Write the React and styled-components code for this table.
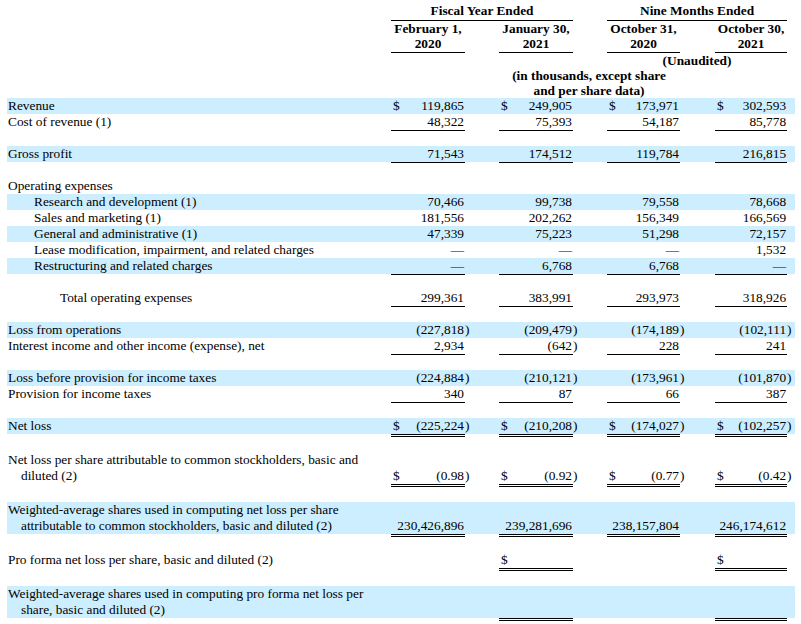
import React from 'react';
import styled, { createGlobalStyle } from 'styled-components';

const GlobalStyle = createGlobalStyle`
  body {
    margin: 0;
    background: #fff;
  }
`;

const Page = styled.div`
  padding: 3px 0 0 7px;
  font-family: "Liberation Serif", "Times New Roman", serif;
  font-size: 10pt;
  color: #000;
`;

const Table = styled.table`
  width: 788px;
  table-layout: fixed;
  border-collapse: separate;
  border-spacing: 0;
  font: inherit;
`;

const Col = styled.col`
  width: ${(p) => p.$w}px;
`;

/* header */
const HeadCell = styled.td`
  padding: 0 0 ${(p) => (p.$line ? 1 : 0)}px;
  line-height: ${(p) => p.$lh || 15}px;
  font-weight: bold;
  text-align: center;
  vertical-align: bottom;
  white-space: nowrap;
  border-bottom: ${(p) => (p.$line ? '1px solid #000' : '0')};
`;

/* body */
const ruleOf = (rule) =>
  rule === 'double' ? '3px double' : rule === 'single' ? '1px solid' : '0 solid';

const Row = styled.tr`
  & > td {
    background: ${(p) => (p.$shade ? '#cceeff' : 'transparent')};
    background-clip: padding-box;
    border-bottom: ${(p) => ruleOf(p.$rule)} transparent;
  }
`;

const Cell = styled.td`
  padding: 0;
  line-height: 16px;
  vertical-align: bottom;
  white-space: nowrap;
  && {
    border-bottom-color: ${(p) => (p.$line ? '#000' : 'transparent')};
  }
`;

const Label = styled(Cell)`
  white-space: normal;
  padding: 0 20px 0 ${(p) => 14 + p.$indent * 26}px;
  text-indent: -13px;
`;

const Dollar = styled(Cell)`
  padding-left: 2px;
  text-align: left;
`;

const Num = styled(Cell)`
  padding-right: 1px;
  text-align: right;
`;

const Paren = styled(Cell)`
  text-align: left;
`;

const Gap = styled(Cell)``;

const Spacer = styled.tr`
  & > td {
    height: 15px;
    padding: 0;
  }
`;

const widths = [384, 12, 62, 7, 27, 12, 62, 7, 27, 12, 61, 7, 28, 12, 60, 8];

const BLANK = { blank: true };
const none = [null, null, null, null];

const rows = [
  { label: 'Revenue', shade: true, dollar: true, vals: ['119,865', '249,905', '173,971', '302,593'] },
  { label: 'Cost of revenue (1)', rule: 'single', vals: ['48,322', '75,393', '54,187', '85,778'] },
  BLANK,
  { label: 'Gross profit', shade: true, rule: 'single', vals: ['71,543', '174,512', '119,784', '216,815'] },
  BLANK,
  { label: 'Operating expenses', vals: none },
  { label: 'Research and development (1)', indent: 1, shade: true, vals: ['70,466', '99,738', '79,558', '78,668'] },
  { label: 'Sales and marketing (1)', indent: 1, vals: ['181,556', '202,262', '156,349', '166,569'] },
  { label: 'General and administrative (1)', indent: 1, shade: true, vals: ['47,339', '75,223', '51,298', '72,157'] },
  { label: 'Lease modification, impairment, and related charges', indent: 1, vals: ['—', '—', '—', '1,532'] },
  { label: 'Restructuring and related charges', indent: 1, shade: true, rule: 'single', vals: ['—', '6,768', '6,768', '—'] },
  BLANK,
  { label: 'Total operating expenses', indent: 2, rule: 'single', vals: ['299,361', '383,991', '293,973', '318,926'] },
  BLANK,
  { label: 'Loss from operations', shade: true, vals: ['(227,818)', '(209,479)', '(174,189)', '(102,111)'] },
  { label: 'Interest income and other income (expense), net', rule: 'single', vals: ['2,934', '(642)', '228', '241'] },
  BLANK,
  { label: 'Loss before provision for income taxes', shade: true, vals: ['(224,884)', '(210,121)', '(173,961)', '(101,870)'] },
  { label: 'Provision for income taxes', rule: 'single', vals: ['340', '87', '66', '387'] },
  BLANK,
  { label: 'Net loss', shade: true, dollar: true, rule: 'double', vals: ['(225,224)', '(210,208)', '(174,027)', '(102,257)'] },
  BLANK,
  {
    label: 'Net loss per share attributable to common stockholders, basic and diluted (2)',
    dollar: true,
    rule: 'double',
    vals: ['(0.98)', '(0.92)', '(0.77)', '(0.42)'],
  },
  BLANK,
  {
    label: 'Weighted-average shares used in computing net loss per share attributable to common stockholders, basic and diluted (2)',
    shade: true,
    rule: 'double',
    vals: ['230,426,896', '239,281,696', '238,157,804', '246,174,612'],
  },
  BLANK,
  { label: 'Pro forma net loss per share, basic and diluted (2)', dollar: true, rule: 'double', vals: [null, '', null, ''] },
  BLANK,
  {
    label: 'Weighted-average shares used in computing pro forma net loss per share, basic and diluted (2)',
    shade: true,
    rule: 'double',
    vals: [null, '', null, ''],
  },
];

function DataRow({ row }) {
  const cells = [];
  row.vals.forEach((v, i) => {
    const on = v !== null;
    const line = on && !!row.rule;
    const closes = on && v.endsWith(')');
    const text = closes ? v.slice(0, -1) : v;
    if (on && row.dollar) {
      cells.push(
        <Dollar key={`d${i}`} $line={line}>$</Dollar>,
        <Num key={`n${i}`} $line={line}>{text}</Num>
      );
    } else {
      cells.push(
        <Num key={`n${i}`} colSpan={2} $line={line}>{text}</Num>
      );
    }
    cells.push(<Paren key={`p${i}`}>{closes ? ')' : ''}</Paren>);
    if (i < 3) cells.push(<Gap key={`g${i}`} />);
  });
  return (
    <Row $shade={row.shade} $rule={row.rule}>
      <Label $indent={row.indent || 0}>{row.label}</Label>
      {cells}
    </Row>
  );
}

const periods = [
  ['February 1,', '2020'],
  ['January 30,', '2021'],
  ['October 31,', '2020'],
  ['October 30,', '2021'],
];

export default function App() {
  return (
    <Page>
      <GlobalStyle />
      <Table>
        <colgroup>
          {widths.map((w, i) => (
            <Col key={i} $w={w} />
          ))}
        </colgroup>
        <tbody>
          <tr>
            <HeadCell />
            <HeadCell colSpan={6} $line $lh={16}>Fiscal Year Ended</HeadCell>
            <HeadCell />
            <HeadCell />
            <HeadCell colSpan={6} $line $lh={16}>Nine Months Ended</HeadCell>
            <HeadCell />
          </tr>
          <tr>
            <HeadCell />
            {periods.map(([a, b], i) => (
              <React.Fragment key={i}>
                <HeadCell colSpan={2} $line>
                  {a}
                  <br />
                  {b}
                </HeadCell>
                <HeadCell />
                {i < 3 && <HeadCell />}
              </React.Fragment>
            ))}
          </tr>
          <tr>
            <HeadCell />
            <HeadCell colSpan={8} />
            <HeadCell colSpan={6}>(Unaudited)</HeadCell>
            <HeadCell />
          </tr>
          <tr>
            <HeadCell />
            <HeadCell colSpan={14}>
              (in thousands, except share
              <br />
              and per share data)
            </HeadCell>
            <HeadCell />
          </tr>
          {rows.map((row, i) =>
            row.blank ? (
              <Spacer key={i}>
                <td colSpan={16} />
              </Spacer>
            ) : (
              <DataRow key={i} row={row} />
            )
          )}
        </tbody>
      </Table>
    </Page>
  );
}
